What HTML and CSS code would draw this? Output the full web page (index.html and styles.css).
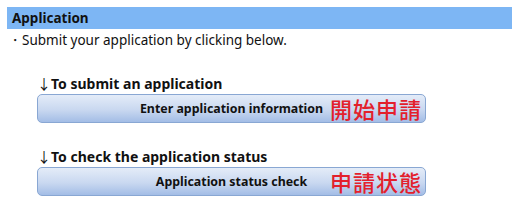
FILE: index.html
```html
<!DOCTYPE html>
<html lang="en">
<head>
<meta charset="utf-8">
<link rel="stylesheet" href="styles.css">
</head>
<body>
<div class="page">
  <h2 class="head">Application</h2>
  <p class="lead">・Submit your application by clicking below.</p>
  <div class="section">
    <p class="label"><span class="arrow">↓</span>To submit an application</p>
    <div class="btn"><span class="btn-text">Enter application information</span><span class="jp">開始申請</span></div>
  </div>
  <div class="section second">
    <p class="label"><span class="arrow">↓</span>To check the application status</p>
    <div class="btn"><span class="btn-text">Application status check</span><span class="jp">申請状態</span></div>
  </div>
</div>
</body>
</html>
```

FILE: styles.css
```css
html, body { margin: 0; padding: 0; background: #fff; }
body { font-family: "Noto Sans", "DejaVu Sans", sans-serif; color: #111; }
.page { padding: 7px 0 0 7px; }
.head {
  margin: 0;
  height: 22px;
  line-height: 22px;
  background: #7db6f4;
  font-size: 13.5px;
  font-weight: bold;
  padding-left: 5px;
  color: #111;
}
.lead {
  margin: 3px 0 0 1px;
  font-size: 13.5px;
  line-height: 17px;
}
.section { margin: 26px 0 0 30px; width: 389px; }
.section.second { margin-top: 25px; }
.label {
  margin: 0 0 2px 0;
  font-size: 14px;
  font-weight: bold;
  line-height: 17px;
}
.arrow {
  color: #111;
  font-weight: normal;
  font-family: "Noto Sans CJK JP", sans-serif;
  font-size: 14px;
}
.btn {
  position: relative;
  height: 27px;
  border: 1px solid #89a7d3;
  border-radius: 5px;
  background: linear-gradient(#e4ecf8, #c9d8f0 55%, #a3bde6);
  display: flex;
  align-items: center;
  justify-content: center;
  font-size: 12.4px;
  font-weight: bold;
}
.jp {
  position: absolute;
  right: 3px;
  top: 0;
  height: 27px;
  line-height: 27px;
  font-family: "Noto Sans CJK JP", sans-serif;
  font-weight: 500;
  font-size: 22px;
  color: #e3202c;
  letter-spacing: 1px;
}
```
